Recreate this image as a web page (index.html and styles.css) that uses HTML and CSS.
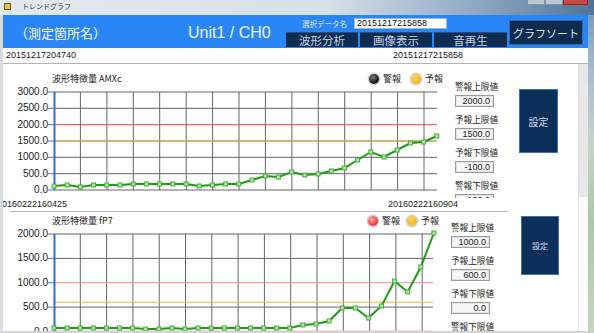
FILE: index.html
```html
<!DOCTYPE html>
<html lang="ja">
<head>
	<meta charset="UTF-8">
	<title>トレンドグラフ</title>
	<link rel="stylesheet" href="styles.css">
</head>
<body>
	<div class="titlebar">
		<span class="app-icon"></span>
		<span class="app-title">トレンドグラフ</span>
		<div class="winbtns"><span class="wb"></span><span class="wb"></span><span class="wb close"></span></div>
	</div>
	<div class="frame">
		<div class="frame-l"></div>
		<div class="main">
			<div class="header">
				<div class="place">（測定箇所名）</div>
				<div class="unit">Unit1 / CH0</div>
				<div class="controls">
					<div class="select-row">
						<span class="select-label">選択データ名</span>
						<span class="select-input">20151217215858</span>
					</div>
					<div class="btn-row">
						<button class="hbtn">波形分析</button>
						<button class="hbtn">画像表示</button>
						<button class="hbtn">音再生</button>
					</div>
				</div>
				<button class="sort">グラフソート</button>
			</div>
			<div class="daterow">
				<span class="date-from">20151217204740</span>
				<span>20151217215858</span>
			</div>
			<div class="content">
				<div class="panels">
					<!-- 上段グラフ -->
					<div class="panel panel-a">
						<div class="chart">
							<div class="chart-head">
								<span class="chart-title">波形特徴量 AMXc</span>
								<div class="legend">
									<span class="lg"><span class="dot dot-black"></span>警報</span>
									<span class="lg"><span class="dot dot-yellow"></span>予報</span>
								</div>
							</div>
							<div class="plot-row">
								<div class="yaxis">
									<span>3000.0</span><span>2500.0</span><span>2000.0</span><span>1500.0</span><span>1000.0</span><span>500.0</span><span>0.0</span>
								</div>
								<svg class="plot" viewBox="48 88 392 106">
									<defs>
										<marker id="sq1" markerUnits="userSpaceOnUse" markerWidth="6" markerHeight="6" refX="3" refY="3">
											<rect x="1" y="1" width="4" height="4" fill="#b4e0ab" stroke="#46ad3a" stroke-width="1"/>
										</marker>
									</defs>
									<path d="M54 92H437M54 108.3H437M54 141H437M54 157.3H437M54 173.7H437M54 190H437" stroke="#666" stroke-width="1"/>
									<path d="M80.4 92V190M106.9 92V190M133.3 92V190M159.7 92V190M186.2 92V190M212.6 92V190M239 92V190M265.4 92V190M291.9 92V190M318.3 92V190M344.7 92V190M371.2 92V190M397.6 92V190M424 92V190" stroke="#666" stroke-width="1"/>
									<path d="M54 124.7H437" stroke="#e5483f" stroke-width="1"/>
									<path d="M54 141H437" stroke="#f2b54a" stroke-width="1"/>
									<path d="M48 92H54M48 108.3H54M48 124.7H54M48 141H54M48 157.3H54M48 173.7H54M48 190H54" stroke="#3a74e6" stroke-width="1"/>
									<path d="M54.5 92V190" stroke="#2e6ae0" stroke-width="2"/>
									<polyline fill="none" stroke="#1f9a14" stroke-width="2" marker-start="url(#sq1)" marker-mid="url(#sq1)" marker-end="url(#sq1)"
										points="54,186 67.2,185 80.4,187 93.6,185 106.8,185 120,185 133.2,184 146.4,184 159.6,184 172.8,184 186,184 199.2,186 212.4,185 225.6,184 238.8,184 252,180 265.2,176 278.4,177 291.6,172 304.8,175 318,174 331.2,171 344.4,168 357.6,160 370.8,152 384,157 397.2,150 410.4,143 423.6,142 436.8,136"/>
								</svg>
							</div>
							<div class="xaxis">
								<span>20160222160425</span>
								<span>20160222160904</span>
							</div>
						</div>
						<div class="limits">
							<div class="lim-label">警報上限値</div>
							<div class="lim-val">2000.0</div>
							<div class="lim-label">予報上限値</div>
							<div class="lim-val">1500.0</div>
							<div class="lim-label">予報下限値</div>
							<div class="lim-val">-100.0</div>
							<div class="lim-label">警報下限値</div>
							<div class="lim-val">-100.0</div>
						</div>
						<button class="set">設定</button>
					</div>
					<div class="sep"></div>
					<!-- 下段グラフ -->
					<div class="panel panel-b">
						<div class="chart">
							<div class="chart-head">
								<span class="chart-title">波形特徴量 fP7</span>
								<div class="legend">
									<span class="lg"><span class="dot dot-red"></span>警報</span>
									<span class="lg"><span class="dot dot-yellow"></span>予報</span>
								</div>
							</div>
							<div class="plot-row">
								<div class="yaxis">
									<span>2000.0</span><span>1500.0</span><span>1000.0</span><span>500.0</span><span>0.0</span>
								</div>
								<svg class="plot" viewBox="48 230 392 106">
									<defs>
										<marker id="sq2" markerUnits="userSpaceOnUse" markerWidth="6" markerHeight="6" refX="3" refY="3">
											<rect x="1" y="1" width="4" height="4" fill="#b4e0ab" stroke="#46ad3a" stroke-width="1"/>
										</marker>
									</defs>
									<path d="M54 234H433M54 258.4H433M54 307.1H433M54 331.5H433" stroke="#666" stroke-width="1"/>
									<path d="M80.3 234V336M106.6 234V336M132.9 234V336M159.2 234V336M185.5 234V336M211.8 234V336M238.1 234V336M264.4 234V336M290.7 234V336M317 234V336M343.3 234V336M369.6 234V336M395.9 234V336M422.2 234V336" stroke="#666" stroke-width="1"/>
									<path d="M54 282.75H433" stroke="#f28a8a" stroke-width="1"/>
									<path d="M54 302.25H433" stroke="#f2b43a" stroke-width="1"/>
									<path d="M54 331H433" stroke="#f4b0b0" stroke-width="1"/>
									<path d="M48 234H54M48 258.4H54M48 282.75H54M48 307.1H54M48 331.5H54" stroke="#3a74e6" stroke-width="1"/>
									<path d="M54.5 234V336" stroke="#2e6ae0" stroke-width="2"/>
									<polyline fill="none" stroke="#1f9a14" stroke-width="2" marker-start="url(#sq2)" marker-mid="url(#sq2)" marker-end="url(#sq2)"
										points="54,328 67.1,328 80.2,328 93.3,328 106.4,328 119.5,328 132.6,328 145.7,329 158.8,329 171.9,328 185,329 198.1,328 211.2,328 224.3,328 237.4,328 250.5,328 263.6,328 276.7,328 289.8,328 302.9,325 316,324 329.1,321 342.2,308 355.3,308 368.4,318 381.5,306 394.6,281 407.7,292 420.8,267 433.9,233"/>
								</svg>
							</div>
						</div>
						<div class="limits">
							<div class="lim-label">警報上限値</div>
							<div class="lim-val">1000.0</div>
							<div class="lim-label">予報上限値</div>
							<div class="lim-val">600.0</div>
							<div class="lim-label">予報下限値</div>
							<div class="lim-val">0.0</div>
							<div class="lim-label">警報下限値</div>
							<div class="lim-val">0.0</div>
						</div>
						<button class="set">設定</button>
					</div>
				</div>
				<div class="vscroll"><div class="vthumb"></div></div>
			</div>
			<div class="bottom"></div>
		</div>
		<div class="frame-r"></div>
	</div>
</body>
</html>
```

FILE: styles.css
```css
*{margin: 0;padding: 0;box-sizing: border-box;}
html,body{width: 594px;height: 333px;overflow: hidden;background: #fff;}
body{
	font-family: "Noto Sans CJK JP", sans-serif;
	color: #222;
}
button{
	font-family: "Noto Sans CJK JP", sans-serif;
	border: none;
	outline: none;
	padding: 0;
}

/* タイトルバー */
.titlebar{
	display: flex;
	align-items: flex-start;
	height: 15px;
	background: linear-gradient(to right, #e3e9ef 0%, #d8e0e9 55%, #90a9c4 80%, #4f7398 100%);
}
.app-icon{
	width: 7px;
	height: 7px;
	margin: 3px 0 0 4px;
	background: #e8c23a;
	border: 1px solid #6a5a20;
}
.app-title{
	margin-left: 11px;
	font-size: 7px;
	line-height: 13px;
	color: #333;
}
.winbtns{
	display: flex;
	margin-left: auto;
	margin-right: 6px;
}
.wb{
	width: 18px;
	height: 5px;
	background: #b9c7d6;
	border: 1px solid #7d93ab;
	border-top: none;
}
.wb.close{
	width: 25px;
	background: #c94a3c;
	border-color: #8a2c22;
}

.frame{display: flex;height: 318px;}
.frame-l{width: 3px;background: #d8dde3;}
.frame-r{width: 6px;background: linear-gradient(to bottom, #7f9dbd 0%, #a9bccf 18%, #c9d2cc 40%, #a9c9a4 65%, #c8d4c4 100%);}
.main{
	width: 585px;
	display: flex;
	flex-direction: column;
}

/* ヘッダー */
.header{
	display: flex;
	align-items: flex-start;
	height: 33px;
	background: #2a86f6;
	color: #fff;
}
.place{
	width: 173px;
	margin-left: 12px;
	font-size: 13px;
	line-height: 33px;
	padding-top: 1px;
	color: #f2f7ff;
}
.unit{
	width: 98px;
	font-family: "Liberation Sans", sans-serif;
	font-size: 16px;
	line-height: 33px;
	padding-top: 1px;
	color: #eef5ff;
}
.controls{
	width: 222px;
	display: flex;
	flex-direction: column;
}
.select-row{
	display: flex;
	align-items: flex-start;
	height: 17px;
}
.select-label{
	width: 52px;
	margin-left: 16px;
	font-size: 7.5px;
	line-height: 17px;
	color: #d6e6ff;
}
.select-input{
	width: 93px;
	height: 11px;
	margin-top: 3px;
	background: #fff;
	border: 1px solid #9cb6d6;
	font-family: "Liberation Sans", sans-serif;
	font-size: 9px;
	line-height: 9px;
	padding-left: 2px;
	color: #111;
}
.btn-row{
	display: flex;
	gap: 2px;
	height: 15px;
}
.hbtn{
	width: 72px;
	height: 15px;
	background: #0c2c51;
	border-top: 1px solid #1d4f8a;
	color: #c5d2e2;
	font-size: 11.5px;
	line-height: 13px;
}
.hbtn:last-child{width: 73px;}
.sort{
	width: 74px;
	height: 25px;
	margin: 5px 0 0 1px;
	background: #0c2b4f;
	border: 1px solid #2f64a6;
	color: #dce6f2;
	font-size: 11px;
}

/* 日付行 */
.daterow{
	display: flex;
	height: 16px;
	padding-left: 3px;
	border-bottom: 1px solid #b4b4b4;
	font-family: "Liberation Sans", sans-serif;
	font-size: 9px;
	line-height: 15px;
	color: #222;
}
.date-from{width: 387px;}

.content{
	display: flex;
	height: 267px;
	overflow: hidden;
}
.panels{width: 575px;}
.vscroll{
	width: 10px;
	border-left: 1px solid #e2e2e2;
}
.vthumb{height: 133px;background: #e8e8e8;}
.bottom{height: 2px;background: #d4d4d4;}

/* グラフパネル */
.panel{display: flex;align-items: flex-start;}
.panel-a{height: 145px;}
.panel-b{height: 122px;}
.sep{
	width: 498px;
	height: 1px;
	margin: 2px 0 0 7px;
	background: #b8b8b8;
}
.chart{width: 447px;flex: none;}
.panel-a .chart{padding-top: 9px;}
.panel-b .chart{padding-top: 3px;}
.chart-head{
	display: flex;
	align-items: center;
	height: 12px;
}
.chart-title{
	margin-left: 49px;
	font-size: 9px;
	line-height: 12px;
}
.legend{
	display: flex;
	align-items: center;
	gap: 10px;
	margin-left: auto;
	font-size: 9px;
	line-height: 12px;
}
.panel-a .legend{margin-right: 7px;}
.panel-b .legend{margin-right: 11px;gap: 7px;}
.lg{display: flex;align-items: center;gap: 4px;}
.dot{
	width: 10px;
	height: 10px;
	border-radius: 50%;
	box-shadow: 0 0 0 1.5px #d2d2d2;
}
.dot-black{background: radial-gradient(circle at 40% 35%, #777, #111 65%);}
.dot-yellow{background: radial-gradient(circle at 40% 35%, #ffd560, #f8b418 70%);}
.dot-red{background: radial-gradient(circle at 40% 35%, #ffb4b4, #f23434 65%);}

.plot-row{
	display: flex;
	align-items: flex-start;
	margin-top: 3px;
}
.yaxis{
	width: 45px;
	height: 110px;
	margin-top: -2px;
	display: flex;
	flex-direction: column;
	justify-content: space-between;
	align-items: flex-end;
	font-family: "Liberation Sans", sans-serif;
	font-size: 10px;
	line-height: 12px;
	color: #222;
}
.panel-b .yaxis{height: 109.5px;}
.plot{
	display: block;
	flex: none;
	width: 392px;
	height: 106px;
}
.xaxis{
	display: flex;
	justify-content: space-between;
	margin: 3px -8px 0 -6px;
	font-family: "Liberation Sans", sans-serif;
	font-size: 9px;
	line-height: 10px;
}

/* 閾値 */
.limits{
	flex: none;
	width: 48px;
	overflow: hidden;
}
.panel-a .limits{margin-left: 5px;height: 134px;padding-top: 17px;}
.panel-b .limits{margin-left: 1px;height: 122px;padding-top: 10px;}
.lim-label{
	font-size: 8.6px;
	line-height: 10px;
	white-space: nowrap;
}
.lim-val{
	width: 39px;
	height: 12px;
	margin: 4px 0 7px;
	padding-right: 3px;
	background: #f6f6f6;
	border: 1px solid #9c9c9c;
	box-shadow: inset 0 0 0 1px #e4e4e4;
	text-align: right;
	font-family: "Liberation Sans", sans-serif;
	font-size: 9px;
	line-height: 10px;
}
.set{
	flex: none;
	background: #0c2f5a;
	border: 1px solid #3a72b4;
	color: #d0dcef;
}
.panel-a .set{width: 39px;height: 64px;margin: 25px 0 0 16px;font-size: 10px;}
.panel-b .set{width: 38px;height: 59px;margin: 4px 0 0 22px;font-size: 8px;}
```
